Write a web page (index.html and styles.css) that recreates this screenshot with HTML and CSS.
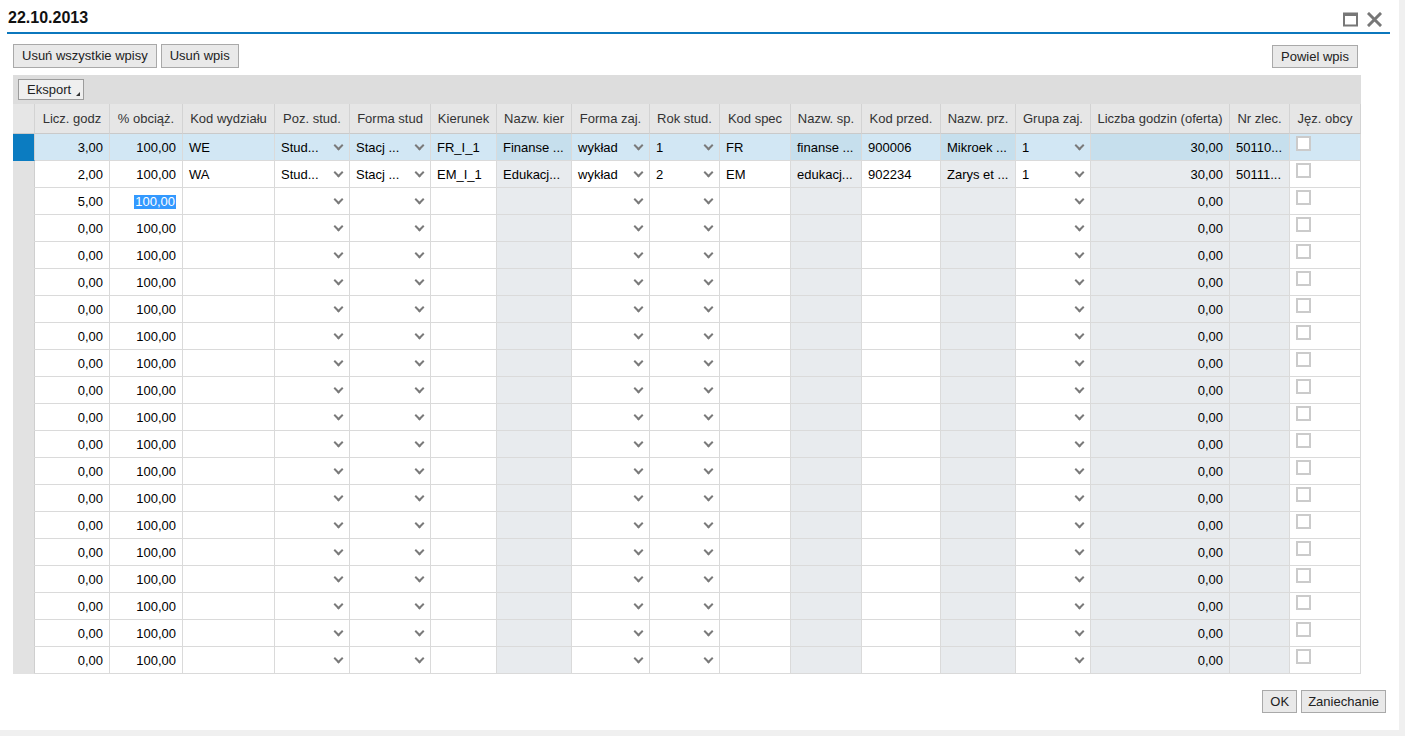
FILE: index.html
```html
<!DOCTYPE html>
<html lang="pl">
<head>
<meta charset="utf-8">
<title>22.10.2013</title>
<link rel="stylesheet" href="styles.css">
</head>
<body>
<div class="dialog">
  <div class="titlebar">
    <h1 class="title">22.10.2013</h1>
    <div class="winctl">
      <svg class="ico" width="15" height="15" viewBox="0 0 15 15"><rect x="1" y="1.5" width="13" height="12" fill="none" stroke="#777" stroke-width="2"/><rect x="1" y="1" width="13" height="3" fill="#777"/></svg>
      <svg class="ico" width="15" height="15" viewBox="0 0 15 15"><path d="M2 2L13 13M13 2L2 13" stroke="#777" stroke-width="3" stroke-linecap="square"/></svg>
    </div>
  </div>
  <div class="content">
    <div class="actions">
      <div class="btns">
        <button class="btn">Usuń wszystkie wpisy</button>
        <button class="btn">Usuń wpis</button>
      </div>
      <button class="btn dup">Powiel wpis</button>
    </div>
    <div class="grid">
      <div class="toolbar"><button class="btn menu">Eksport<span class="tri"></span></button></div>
      <table class="tbl">
        <colgroup>
          <col class="c0"><col class="c1"><col class="c2"><col class="c3"><col class="c4"><col class="c5"><col class="c6"><col class="c7"><col class="c8"><col class="c9"><col class="c10"><col class="c11"><col class="c12"><col class="c13"><col class="c14"><col class="c15"><col class="c16"><col class="c17">
        </colgroup>
        <thead>
          <tr><th></th><th>Licz. godz</th><th>% obciąż.</th><th>Kod wydziału</th><th>Poz. stud.</th><th>Forma stud</th><th>Kierunek</th><th>Nazw. kier</th><th>Forma zaj.</th><th>Rok stud.</th><th>Kod spec</th><th>Nazw. sp.</th><th>Kod przed.</th><th>Nazw. prz.</th><th>Grupa zaj.</th><th>Liczba godzin (oferta)</th><th>Nr zlec.</th><th>Jęz. obcy</th></tr>
        </thead>
        <tbody>
          <tr class="cur"><td class="rh"></td><td class="n">3,00</td><td class="n">100,00</td><td>WE</td><td class="dd"><div class="dv">Stud...</div></td><td class="dd"><div class="dv">Stacj ...</div></td><td>FR_I_1</td><td class="ro">Finanse ...</td><td class="dd"><div class="dv">wykład</div></td><td class="dd"><div class="dv">1</div></td><td>FR</td><td class="ro">finanse ...</td><td>900006</td><td class="ro">Mikroek ...</td><td class="dd"><div class="dv">1</div></td><td class="ro n">30,00</td><td class="ro">50110...</td><td class="cbc"><div class="cb"></div></td></tr>
          <tr><td class="rh"></td><td class="n">2,00</td><td class="n">100,00</td><td>WA</td><td class="dd"><div class="dv">Stud...</div></td><td class="dd"><div class="dv">Stacj ...</div></td><td>EM_I_1</td><td class="ro">Edukacj...</td><td class="dd"><div class="dv">wykład</div></td><td class="dd"><div class="dv">2</div></td><td>EM</td><td class="ro">edukacj...</td><td>902234</td><td class="ro">Zarys et ...</td><td class="dd"><div class="dv">1</div></td><td class="ro n">30,00</td><td class="ro">50111...</td><td class="cbc"><div class="cb"></div></td></tr>
          <tr><td class="rh"></td><td class="n">5,00</td><td class="n"><span class="hl">100,00</span></td><td></td><td class="dd"><div class="dv"></div></td><td class="dd"><div class="dv"></div></td><td></td><td class="ro"></td><td class="dd"><div class="dv"></div></td><td class="dd"><div class="dv"></div></td><td></td><td class="ro"></td><td></td><td class="ro"></td><td class="dd"><div class="dv"></div></td><td class="ro n">0,00</td><td class="ro"></td><td class="cbc"><div class="cb"></div></td></tr>
          <tr><td class="rh"></td><td class="n">0,00</td><td class="n">100,00</td><td></td><td class="dd"><div class="dv"></div></td><td class="dd"><div class="dv"></div></td><td></td><td class="ro"></td><td class="dd"><div class="dv"></div></td><td class="dd"><div class="dv"></div></td><td></td><td class="ro"></td><td></td><td class="ro"></td><td class="dd"><div class="dv"></div></td><td class="ro n">0,00</td><td class="ro"></td><td class="cbc"><div class="cb"></div></td></tr>
          <tr><td class="rh"></td><td class="n">0,00</td><td class="n">100,00</td><td></td><td class="dd"><div class="dv"></div></td><td class="dd"><div class="dv"></div></td><td></td><td class="ro"></td><td class="dd"><div class="dv"></div></td><td class="dd"><div class="dv"></div></td><td></td><td class="ro"></td><td></td><td class="ro"></td><td class="dd"><div class="dv"></div></td><td class="ro n">0,00</td><td class="ro"></td><td class="cbc"><div class="cb"></div></td></tr>
          <tr><td class="rh"></td><td class="n">0,00</td><td class="n">100,00</td><td></td><td class="dd"><div class="dv"></div></td><td class="dd"><div class="dv"></div></td><td></td><td class="ro"></td><td class="dd"><div class="dv"></div></td><td class="dd"><div class="dv"></div></td><td></td><td class="ro"></td><td></td><td class="ro"></td><td class="dd"><div class="dv"></div></td><td class="ro n">0,00</td><td class="ro"></td><td class="cbc"><div class="cb"></div></td></tr>
          <tr><td class="rh"></td><td class="n">0,00</td><td class="n">100,00</td><td></td><td class="dd"><div class="dv"></div></td><td class="dd"><div class="dv"></div></td><td></td><td class="ro"></td><td class="dd"><div class="dv"></div></td><td class="dd"><div class="dv"></div></td><td></td><td class="ro"></td><td></td><td class="ro"></td><td class="dd"><div class="dv"></div></td><td class="ro n">0,00</td><td class="ro"></td><td class="cbc"><div class="cb"></div></td></tr>
          <tr><td class="rh"></td><td class="n">0,00</td><td class="n">100,00</td><td></td><td class="dd"><div class="dv"></div></td><td class="dd"><div class="dv"></div></td><td></td><td class="ro"></td><td class="dd"><div class="dv"></div></td><td class="dd"><div class="dv"></div></td><td></td><td class="ro"></td><td></td><td class="ro"></td><td class="dd"><div class="dv"></div></td><td class="ro n">0,00</td><td class="ro"></td><td class="cbc"><div class="cb"></div></td></tr>
          <tr><td class="rh"></td><td class="n">0,00</td><td class="n">100,00</td><td></td><td class="dd"><div class="dv"></div></td><td class="dd"><div class="dv"></div></td><td></td><td class="ro"></td><td class="dd"><div class="dv"></div></td><td class="dd"><div class="dv"></div></td><td></td><td class="ro"></td><td></td><td class="ro"></td><td class="dd"><div class="dv"></div></td><td class="ro n">0,00</td><td class="ro"></td><td class="cbc"><div class="cb"></div></td></tr>
          <tr><td class="rh"></td><td class="n">0,00</td><td class="n">100,00</td><td></td><td class="dd"><div class="dv"></div></td><td class="dd"><div class="dv"></div></td><td></td><td class="ro"></td><td class="dd"><div class="dv"></div></td><td class="dd"><div class="dv"></div></td><td></td><td class="ro"></td><td></td><td class="ro"></td><td class="dd"><div class="dv"></div></td><td class="ro n">0,00</td><td class="ro"></td><td class="cbc"><div class="cb"></div></td></tr>
          <tr><td class="rh"></td><td class="n">0,00</td><td class="n">100,00</td><td></td><td class="dd"><div class="dv"></div></td><td class="dd"><div class="dv"></div></td><td></td><td class="ro"></td><td class="dd"><div class="dv"></div></td><td class="dd"><div class="dv"></div></td><td></td><td class="ro"></td><td></td><td class="ro"></td><td class="dd"><div class="dv"></div></td><td class="ro n">0,00</td><td class="ro"></td><td class="cbc"><div class="cb"></div></td></tr>
          <tr><td class="rh"></td><td class="n">0,00</td><td class="n">100,00</td><td></td><td class="dd"><div class="dv"></div></td><td class="dd"><div class="dv"></div></td><td></td><td class="ro"></td><td class="dd"><div class="dv"></div></td><td class="dd"><div class="dv"></div></td><td></td><td class="ro"></td><td></td><td class="ro"></td><td class="dd"><div class="dv"></div></td><td class="ro n">0,00</td><td class="ro"></td><td class="cbc"><div class="cb"></div></td></tr>
          <tr><td class="rh"></td><td class="n">0,00</td><td class="n">100,00</td><td></td><td class="dd"><div class="dv"></div></td><td class="dd"><div class="dv"></div></td><td></td><td class="ro"></td><td class="dd"><div class="dv"></div></td><td class="dd"><div class="dv"></div></td><td></td><td class="ro"></td><td></td><td class="ro"></td><td class="dd"><div class="dv"></div></td><td class="ro n">0,00</td><td class="ro"></td><td class="cbc"><div class="cb"></div></td></tr>
          <tr><td class="rh"></td><td class="n">0,00</td><td class="n">100,00</td><td></td><td class="dd"><div class="dv"></div></td><td class="dd"><div class="dv"></div></td><td></td><td class="ro"></td><td class="dd"><div class="dv"></div></td><td class="dd"><div class="dv"></div></td><td></td><td class="ro"></td><td></td><td class="ro"></td><td class="dd"><div class="dv"></div></td><td class="ro n">0,00</td><td class="ro"></td><td class="cbc"><div class="cb"></div></td></tr>
          <tr><td class="rh"></td><td class="n">0,00</td><td class="n">100,00</td><td></td><td class="dd"><div class="dv"></div></td><td class="dd"><div class="dv"></div></td><td></td><td class="ro"></td><td class="dd"><div class="dv"></div></td><td class="dd"><div class="dv"></div></td><td></td><td class="ro"></td><td></td><td class="ro"></td><td class="dd"><div class="dv"></div></td><td class="ro n">0,00</td><td class="ro"></td><td class="cbc"><div class="cb"></div></td></tr>
          <tr><td class="rh"></td><td class="n">0,00</td><td class="n">100,00</td><td></td><td class="dd"><div class="dv"></div></td><td class="dd"><div class="dv"></div></td><td></td><td class="ro"></td><td class="dd"><div class="dv"></div></td><td class="dd"><div class="dv"></div></td><td></td><td class="ro"></td><td></td><td class="ro"></td><td class="dd"><div class="dv"></div></td><td class="ro n">0,00</td><td class="ro"></td><td class="cbc"><div class="cb"></div></td></tr>
          <tr><td class="rh"></td><td class="n">0,00</td><td class="n">100,00</td><td></td><td class="dd"><div class="dv"></div></td><td class="dd"><div class="dv"></div></td><td></td><td class="ro"></td><td class="dd"><div class="dv"></div></td><td class="dd"><div class="dv"></div></td><td></td><td class="ro"></td><td></td><td class="ro"></td><td class="dd"><div class="dv"></div></td><td class="ro n">0,00</td><td class="ro"></td><td class="cbc"><div class="cb"></div></td></tr>
          <tr><td class="rh"></td><td class="n">0,00</td><td class="n">100,00</td><td></td><td class="dd"><div class="dv"></div></td><td class="dd"><div class="dv"></div></td><td></td><td class="ro"></td><td class="dd"><div class="dv"></div></td><td class="dd"><div class="dv"></div></td><td></td><td class="ro"></td><td></td><td class="ro"></td><td class="dd"><div class="dv"></div></td><td class="ro n">0,00</td><td class="ro"></td><td class="cbc"><div class="cb"></div></td></tr>
          <tr><td class="rh"></td><td class="n">0,00</td><td class="n">100,00</td><td></td><td class="dd"><div class="dv"></div></td><td class="dd"><div class="dv"></div></td><td></td><td class="ro"></td><td class="dd"><div class="dv"></div></td><td class="dd"><div class="dv"></div></td><td></td><td class="ro"></td><td></td><td class="ro"></td><td class="dd"><div class="dv"></div></td><td class="ro n">0,00</td><td class="ro"></td><td class="cbc"><div class="cb"></div></td></tr>
          <tr><td class="rh"></td><td class="n">0,00</td><td class="n">100,00</td><td></td><td class="dd"><div class="dv"></div></td><td class="dd"><div class="dv"></div></td><td></td><td class="ro"></td><td class="dd"><div class="dv"></div></td><td class="dd"><div class="dv"></div></td><td></td><td class="ro"></td><td></td><td class="ro"></td><td class="dd"><div class="dv"></div></td><td class="ro n">0,00</td><td class="ro"></td><td class="cbc"><div class="cb"></div></td></tr>
        </tbody>
      </table>
    </div>
  </div>
  <div class="footer">
    <button class="btn small ok">OK</button>
    <button class="btn small">Zaniechanie</button>
  </div>
</div>
</body>
</html>
```
FILE: styles.css
```css
* { box-sizing: border-box; }
html, body { margin: 0; padding: 0; }
body {
  background: #f0f0f0;
  font-family: "Liberation Sans", Arial, sans-serif;
  font-size: 13px;
  color: #000;
}
.dialog {
  width: 1399px;
  height: 730px;
  background: #fff;
}
.titlebar {
  display: flex;
  justify-content: space-between;
  align-items: flex-start;
  margin: 0 9px 0 7px;
  height: 34px;
  padding: 8px 0 0 1px;
  border-bottom: 2px solid #0b77bd;
}
.title {
  margin: 0;
  font-size: 16px;
  line-height: 20px;
  font-weight: bold;
  color: #111;
}
.winctl {
  display: flex;
  gap: 9px;
  padding-top: 4px;
  margin-right: 8px;
}
.ico { display: block; }
.content {
  padding-left: 13px;
}
.actions {
  display: flex;
  justify-content: space-between;
  align-items: flex-start;
  width: 1348px;
  height: 24px;
  margin-top: 10px;
}
.btns { display: flex; gap: 4px; }
.btn {
  font-family: "Liberation Sans", Arial, sans-serif;
  font-size: 13px;
  color: #222;
  height: 24px;
  padding: 0 8px;
  background: #e9e9e9;
  border: 1px solid #a9a9a9;
  border-radius: 0;
  line-height: 22px;
}
.dup { margin-right: 3px; margin-top: 1px; height: 23px; }
.grid {
  margin-top: 7px;
  width: 1348px;
}
.toolbar {
  background: #dddddd;
  height: 29px;
  padding: 4px 5px;
}
.menu {
  display: inline-flex;
  align-items: center;
  height: 21px;
  padding: 0 3px 0 8px;
  background: #efefef;
  border-color: #9c9c9c;
}
.tri {
  align-self: flex-end;
  width: 0;
  height: 0;
  margin: 0 0 3px 5px;
  border-left: 4px solid transparent;
  border-bottom: 4px solid #333;
}
.tbl {
  width: 1348px;
  table-layout: fixed;
  border-collapse: separate;
  border-spacing: 0;
}
.c0 { width: 22px; }
.c1 { width: 75px; }
.c2 { width: 73px; }
.c3 { width: 92px; }
.c4 { width: 75px; }
.c5 { width: 81px; }
.c6 { width: 66px; }
.c7 { width: 75px; }
.c8 { width: 78px; }
.c9 { width: 70px; }
.c10 { width: 71px; }
.c11 { width: 71px; }
.c12 { width: 79px; }
.c13 { width: 75px; }
.c14 { width: 75px; }
.c15 { width: 139px; }
.c16 { width: 60px; }
.c17 { width: 71px; }
.tbl th {
  height: 30px;
  padding: 0 2px;
  background: #e6e6e6;
  color: #333;
  font-weight: normal;
  text-align: center;
  white-space: nowrap;
  overflow: hidden;
  border-right: 1px solid #d3d3d3;
  border-bottom: 1px solid #cacaca;
}
.tbl td {
  height: 27px;
  padding: 0 6px;
  white-space: nowrap;
  overflow: hidden;
  vertical-align: middle;
  border-right: 1px solid #dadada;
  border-bottom: 1px solid #dadada;
  background: #fff;
}
.tbl td.n { text-align: right; }
.tbl td.ro { background: #e8ebee; }
.tbl td.rh {
  background: #e2e2e2;
  border-right-color: #cfcfcf;
  border-bottom-color: #e2e2e2;
  padding: 0;
}
.tbl tr.cur td { background: #d2e7f4; }
.tbl tr.cur td.ro { background: #c6dfed; }
.tbl tr.cur td.rh { background: #0b7cc1; border-bottom-color: #0b7cc1; }
.dv {
  display: flex;
  align-items: center;
  height: 14px;
}
.dv::after {
  content: "";
  margin-left: auto;
  margin-right: 1px;
  margin-top: -3px;
  width: 5px;
  height: 5px;
  border-right: 2px solid #7a7a7a;
  border-bottom: 2px solid #7a7a7a;
  transform: rotate(45deg);
}
.hl {
  background: #3399ff;
  color: #fff;
  padding: 0 1px;
  line-height: 14px;
  display: inline-block;
}
.tbl td.cbc { vertical-align: top; padding: 2px 0 0 6px; }
.cb {
  width: 15px;
  height: 15px;
  border: 2px solid #cbcbcb;
  background: #fff;
}
.footer {
  display: flex;
  justify-content: flex-end;
  gap: 4px;
  padding-right: 13px;
  margin-top: 16px;
}
.small { height: 23px; padding: 0 6px; line-height: 21px; }
.ok { min-width: 35px; }
```
